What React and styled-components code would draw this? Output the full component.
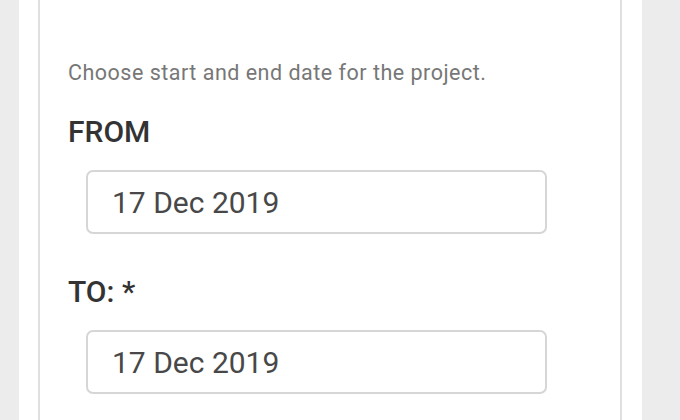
import React from "react";
import styled, { createGlobalStyle } from "styled-components";

const Global = createGlobalStyle`
  html, body {
    margin: 0;
    padding: 0;
    background: #ececec;
    font-family: Roboto, "Noto Sans", sans-serif;
  }
`;

const Column = styled.div`
  margin-left: 19px;
  width: 623px;
  min-height: 420px;
  background: #ffffff;
  padding: 0 20px 0 19px;
  box-sizing: border-box;
  display: flex;
`;

const Card = styled.section`
  flex: 1;
  border-left: 2px solid #e0e0e0;
  border-right: 2px solid #e0e0e0;
  padding: 59px 0 40px 28px;
  display: flex;
  flex-direction: column;
`;

const Hint = styled.p`
  margin: 0;
  font-size: 21.5px;
  line-height: 28px;
  letter-spacing: 0.5px;
  color: #777777;
`;

const Label = styled.h3`
  margin: ${(p) => p.$top}px 0 0;
  font-size: 30px;
  line-height: 36px;
  font-weight: 500;
  color: #333333;
`;

const DateField = styled.div`
  margin: 20px 0 0 18px;
  width: 461px;
  height: 64px;
  box-sizing: border-box;
  border: 2px solid #d6d6d6;
  border-radius: 7px;
  display: flex;
  align-items: center;
  padding-left: 24px;
  font-size: 30px;
  color: #484848;
`;

const fields = [
  { label: "FROM", value: "17 Dec 2019", top: 27 },
  { label: "TO: *", value: "17 Dec 2019", top: 40 },
];

export default function App() {
  return (
    <>
      <Global />
      <Column>
        <Card>
          <Hint>Choose start and end date for the project.</Hint>
          {fields.map((f) => (
            <React.Fragment key={f.label}>
              <Label $top={f.top}>{f.label}</Label>
              <DateField>{f.value}</DateField>
            </React.Fragment>
          ))}
        </Card>
      </Column>
    </>
  );
}
